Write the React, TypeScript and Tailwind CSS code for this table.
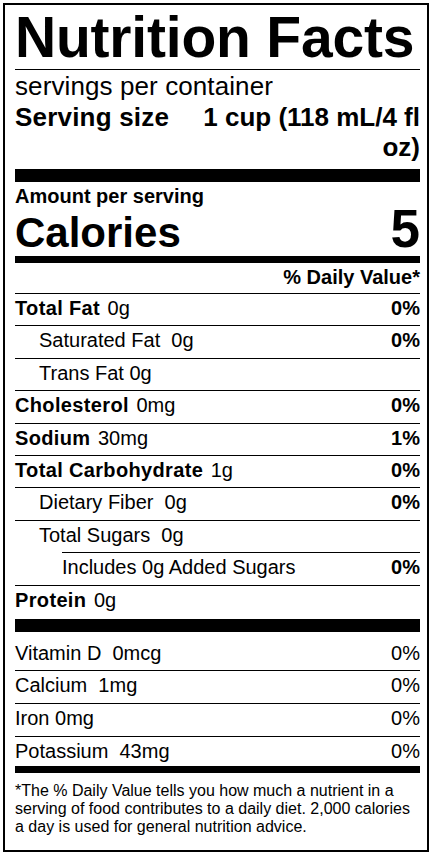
type Nutrient = {
  label: string;
  amount: string;
  dv?: string;
  bold?: boolean;
  level?: 0 | 1 | 2;
};

const nutrients: Nutrient[] = [
  { label: "Total Fat", amount: " 0g", dv: "0%", bold: true },
  { label: "Saturated Fat", amount: "\u00a0 0g", dv: "0%", level: 1 },
  { label: "Trans Fat", amount: " 0g", level: 1 },
  { label: "Cholesterol", amount: " 0mg", dv: "0%", bold: true },
  { label: "Sodium", amount: " 30mg", dv: "1%", bold: true },
  { label: "Total Carbohydrate", amount: " 1g", dv: "0%", bold: true },
  { label: "Dietary Fiber", amount: "\u00a0 0g", dv: "0%", level: 1 },
  { label: "Total Sugars", amount: "\u00a0 0g", level: 1 },
  { label: "Includes 0g Added Sugars", amount: "", dv: "0%", level: 2 },
];

const vitamins = [
  { label: "Vitamin D\u00a0 0mcg", dv: "0%" },
  { label: "Calcium\u00a0 1mg", dv: "0%" },
  { label: "Iron 0mg", dv: "0%" },
  { label: "Potassium\u00a0 43mg", dv: "0%" },
];

function NutrientRow({ item }: { item: Nutrient }) {
  return (
    <div className={item.level === 2 ? "ml-[47px] border-t border-black" : "border-t border-black"}>
      <div
        className={`flex h-[31.4px] justify-between leading-[29.6px] ${
          item.level === 1 ? "pl-[24px]" : ""
        }`}
      >
        <span>
          {item.bold ? (
            <span className="font-bold tracking-[0.35px]">{item.label}</span>
          ) : (
            item.label
          )}
          {item.bold ? <span className="ml-[2px]">{item.amount}</span> : item.amount}
        </span>
        {item.dv && <span className="font-bold">{item.dv}</span>}
      </div>
    </div>
  );
}

export default function App() {
  return (
    <div className="min-h-screen bg-white pt-[3px] pl-[3px] text-black [font-family:'Liberation_Sans',Arial,sans-serif]">
      <div className="h-[849px] w-[426px] border-2 border-black pl-[10px] pr-[7px]">
        {/* Header */}
        <h1 className="h-[64px] whitespace-nowrap text-[57px] font-bold leading-[64px] tracking-[-0.2px]">
          Nutrition Facts
        </h1>
        <div className="h-px bg-black" />
        <p className="text-[26px] leading-[32px] tracking-[0.1px]">servings per container</p>
        <div className="flex gap-4 text-[26px] font-bold leading-[30px]">
          <span className="shrink-0 tracking-[0.2px]">Serving size</span>
          <span className="flex-1 text-right">1 cup (118 mL/4 fl oz)</span>
        </div>
        <div className="mt-[7px] h-[13px] bg-black" />

        {/* Calories */}
        <p className="text-[20px] font-bold leading-[28px]">Amount per serving</p>
        <div className="flex h-[46px] items-baseline justify-between font-bold">
          <span className="text-[42px] leading-[46px]">Calories</span>
          <span className="text-[53px] leading-[37.7px]">5</span>
        </div>
        <div className="h-[7px] bg-black" />
        <p className="pb-[2px] text-right text-[20px] font-bold leading-[28px]">% Daily Value*</p>

        {/* Nutrients */}
        <div className="text-[20px]">
          {nutrients.map((n) => (
            <NutrientRow key={n.label} item={n} />
          ))}
          <div className="border-t border-black">
            <div className="h-[33px] leading-[29.6px]">
              <span className="font-bold tracking-[0.35px]">Protein</span>
              <span className="ml-[2px]"> 0g</span>
            </div>
          </div>
        </div>
        <div className="h-[13px] bg-black" />

        {/* Vitamins and minerals */}
        <div className="text-[20px] leading-[29.6px]">
          <div className="flex h-[38px] justify-between pt-[7px]">
            <span>{vitamins[0].label}</span>
            <span>{vitamins[0].dv}</span>
          </div>
          {vitamins.slice(1).map((v, i) => (
            <div
              key={v.label}
              className={`flex justify-between border-t border-black ${
                i === 2 ? "h-[30px]" : "h-[33px]"
              }`}
            >
              <span>{v.label}</span>
              <span>{v.dv}</span>
            </div>
          ))}
        </div>
        <div className="h-[7px] bg-black" />

        <p className="pt-[9px] text-[16px] leading-[18px]">
          *The % Daily Value tells you how much a nutrient in a serving of food contributes to a daily
          diet. 2,000 calories a day is used for general nutrition advice.
        </p>
      </div>
    </div>
  );
}
